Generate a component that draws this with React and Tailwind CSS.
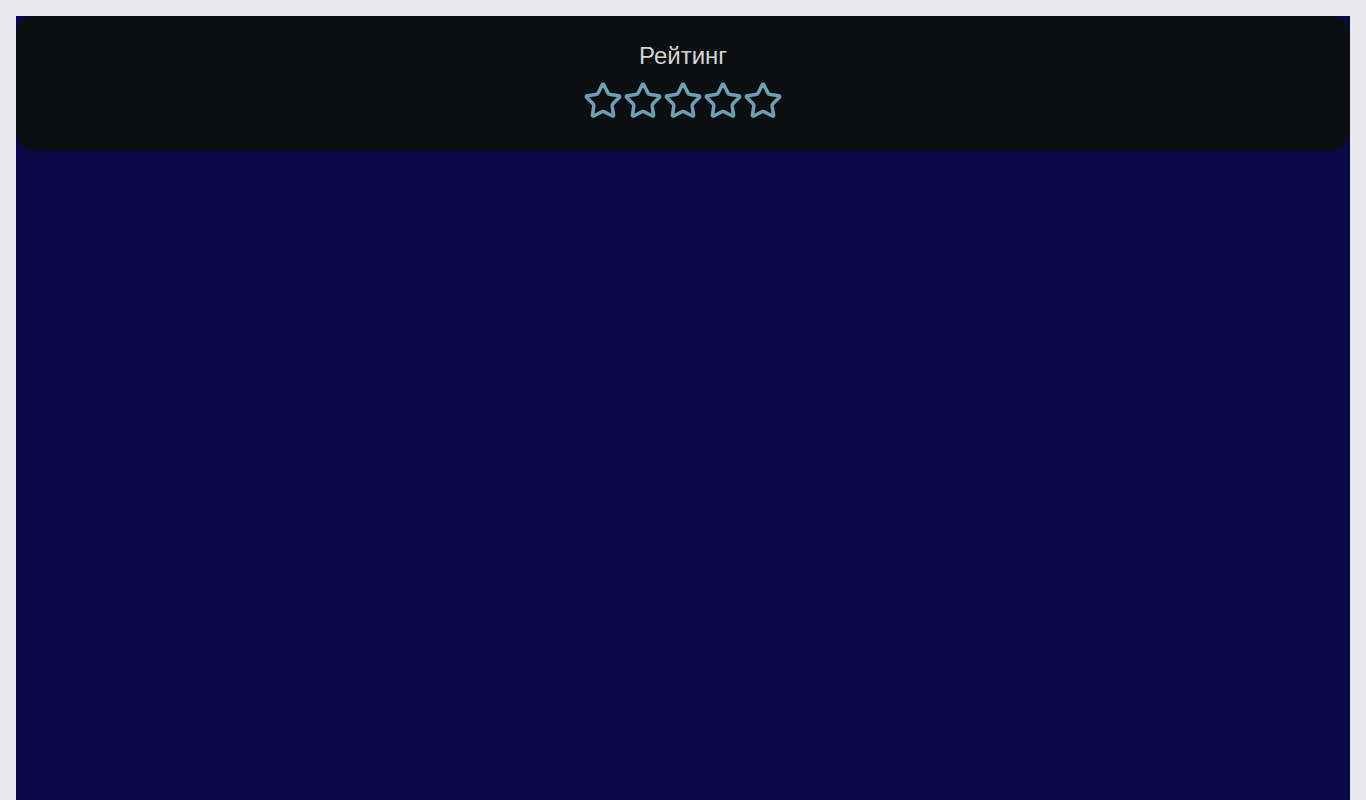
import React from 'react';
import { Star } from 'lucide-react';

export default function App() {
  const stars = [1, 2, 3, 4, 5];

  return (
    <div className="min-h-screen bg-[#e8e8ea] px-4 pt-4" style={{ fontFamily: '"Liberation Sans", Arial, sans-serif' }}>
      <main className="min-h-[820px] bg-[#0a0847]">
        {/* Rating header */}
        <section className="flex flex-col items-center rounded-[20px] bg-[#0b0f12] pt-[26px] pb-[30px]">
          <h2 className="text-[24px] leading-[28px] text-[#d4d4d6]">Рейтинг</h2>
          <div className="mt-[11px] flex">
            {stars.map((n) => (
              <Star key={n} size={40} strokeWidth={2.1} className="text-[#6e9fb3]" />
            ))}
          </div>
        </section>
      </main>
    </div>
  );
}
